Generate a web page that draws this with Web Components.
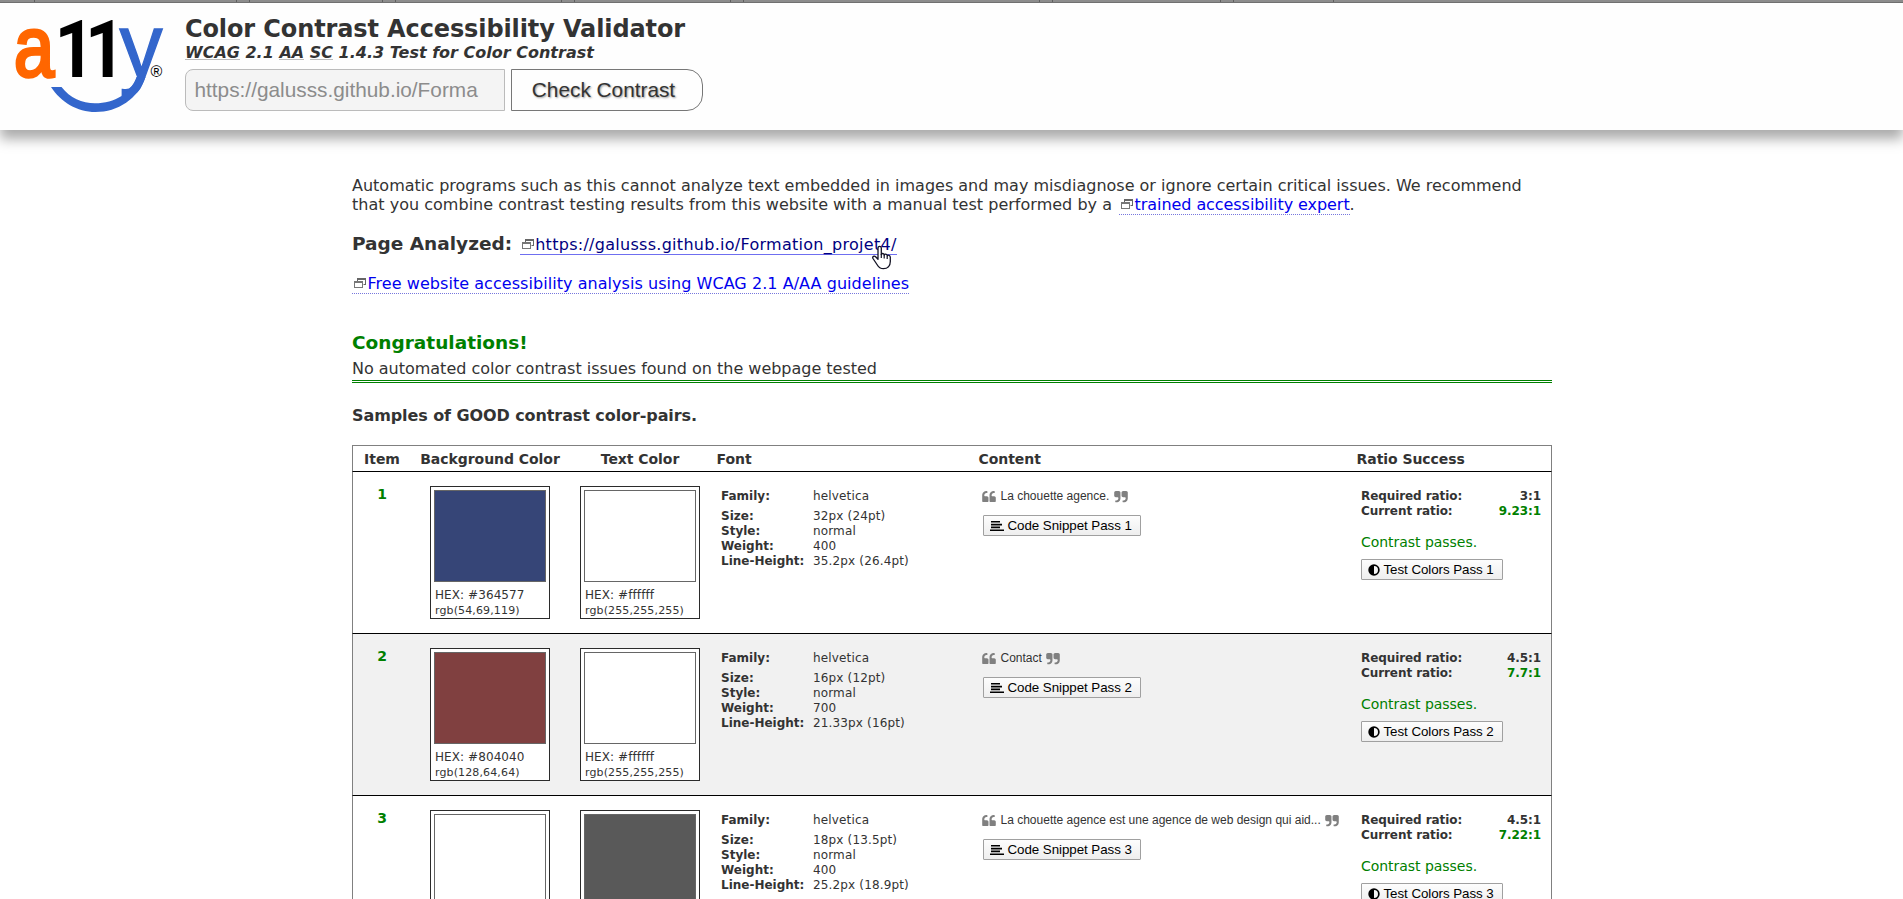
<!DOCTYPE html>
<html lang="en">
<head>
<meta charset="utf-8">
<title>Color Contrast Accessibility Validator</title>
<style>
html,body{margin:0;height:899px;overflow:hidden;background:#fff}
body{font-family:"DejaVu Sans",sans-serif;font-size:16px;color:#333}
</style>
</head>
<body>
<contrast-app></contrast-app>
<script>
const define = (name, html) => customElements.define(name, class extends HTMLElement {
  constructor() {
    super();
    const t = document.createElement('template');
    t.innerHTML = typeof html === 'function' ? '' : html;
    const root = this.attachShadow({ mode: 'open' });
    if (typeof html !== 'function') root.appendChild(t.content.cloneNode(true));
  }
  connectedCallback() {
    if (typeof html === 'function') this.shadowRoot.innerHTML = html(n => this.getAttribute(n) || '');
  }
});

/* browser tab edge above the page */
define('tab-strip', () => `
<style>
:host{display:flex;height:2px;background:#8b8b8b;border-bottom:1px solid #6c6c6c}
i{box-sizing:border-box;border-right:1px solid #5c5c5c;flex:none}
</style>` + [35,202,13,133,13,166,13,156,13,296,13,168,13,100].map(w => `<i style="width:${w}px"></i>`).join(''));

define('a11y-logo', `
<style>
:host{display:block;width:185px;flex:none}
svg{display:block}
</style>
<svg width="185" height="127" viewBox="0 3 185 127" font-family="Liberation Sans, sans-serif">
  <text transform="translate(14 75.500) scale(.84 1)" font-size="86" fill="#f60" stroke="#f60" stroke-width="3.500">a</text>
  <g font-family="Roboto, sans-serif" fill="#000" font-size="80" font-weight="bold">
    <text transform="translate(54.500 77) scale(.88 1)">1</text><text transform="translate(85 77) scale(.88 1)">1</text>
  </g>
  <text transform="translate(119.500 77)" font-size="90" fill="#36c" stroke="#36c" stroke-width="1.400" textLength="43" lengthAdjust="spacingAndGlyphs">y</text>
  <path d="M51 87H61.500C70 98 82 103.300 95 103.300C115 103.300 131 93 136.500 77L145.500 77C138 99 118 112 95.500 112C77 112 61 102 51 87Z" fill="#36c"/>
  <text x="150.500" y="76.500" font-size="16" fill="#000">®</text>
</svg>`);

define('site-header', `
<style>
:host{display:flex;height:127px;background:#fefefe;box-shadow:0 9px 12px #aaa;position:relative}
.col{padding-top:12px}
h1{margin:0;font-size:24px;line-height:28px;letter-spacing:-.114px}
p{margin:0;font-size:16px;line-height:20px;font-weight:bold;font-style:italic;white-space:nowrap}
abbr{text-decoration:none;box-shadow:0 1px #bbb;display:inline-block;height:16px;line-height:20px}
form{display:flex;gap:6px;margin:6px 0 0}
input,button{box-sizing:border-box;height:42px;font:20.8px "Liberation Sans",sans-serif;margin:0}
input{width:320px;padding:0 8.500px;border:1px solid #bbb;border-radius:8px 0 0 8px;background:#f4f4f4;color:#8c8c8c}
button{width:192px;padding:0 7px 0 0;border:1px solid #777;border-radius:0 16px 16px 0;background:#fefefe;color:#333;text-shadow:1px 1px 2px #999}
</style>
<a11y-logo></a11y-logo>
<div class="col">
  <h1>Color Contrast Accessibility Validator</h1>
  <p><abbr>WCAG</abbr> 2.1 <abbr>AA</abbr> <abbr>SC</abbr> 1.4.3 Test for Color Contrast</p>
  <form><input value="https://galusss.github.io/Forma" disabled><button type="button">Check Contrast</button></form>
</div>`);

define('ext-link', `
<style>
:host{color:#00e;border-bottom:1px dotted #77d}
:host([hovered]){color:#000080;border-bottom:1px solid #6f6ff0}
svg{width:12px;height:11px;margin:0 1.500px 0 2px;vertical-align:1px}
</style>
<svg viewBox="0 0 12 11"><path d="M3 1H12V8H9.500V7H11V3H4V4H3Z" fill="#666"/><path d="M0 4H9V11H0ZM1 6V10H8V6Z" fill="#777" fill-rule="evenodd"/></svg><slot></slot>`);

define('hand-cursor', `
<style>:host{position:absolute;left:871px;top:245px;width:22px;height:25px}svg{display:block}</style>
<svg width="22" height="25" viewBox="0 0 22 25"><path d="M7 3C7 .700 10.300 .700 10.300 3V9.500C10.600 8 13 8.200 13.200 10C13.800 8.700 16 9 16.200 10.800C17 9.700 19.300 10.200 19.300 12.200V16.500C19.300 21 16.500 23.700 12.500 23.700C9 23.700 7.600 22.300 6 19.500L2 13.500C1 11.700 3.200 10.300 4.600 11.700L7 14.200Z" fill="#fff" stroke="#112" stroke-width="1.300" stroke-linejoin="round"/><path d="M10.300 9V13M13.200 10V13.500M16.200 11V14" stroke="#112" stroke-width="1.200"/></svg>`);

define('color-swatch', a => `
<style>
:host{display:block;box-sizing:border-box;width:120px;height:133px;border:1px solid #2b2b2b;padding:3px;background:#fff;white-space:nowrap}
.c{box-sizing:border-box;height:92px;border:1px solid #666;background:${a('hex')};margin-bottom:5px}
.h{font-size:12px;line-height:16px;padding-left:1px;letter-spacing:.080px}
.r{font-size:11px;line-height:15px;padding-left:1px;letter-spacing:.13px}
</style><div class="c"></div><div class="h">HEX: ${a('hex')}</div><div class="r">rgb(${a('rgb')})</div>`);

const icons = {
  code: '<svg width="14" height="10" viewBox="0 0 14 10"><path d="M1 0H10V1.600H1ZM1 2.800H12V4.400H1ZM1 5.600H10V7.200H1ZM0 8.400H14V10H0Z"/></svg>',
  contrast: '<svg width="12" height="12" viewBox="0 0 12 12"><path fill-rule="evenodd" d="M6 .3A5.700 5.700 0 1 0 6 11.700A5.700 5.700 0 1 0 6 .3ZM6 2A4 4 0 0 1 6 10Z"/></svg>'
};
define('pass-button', a => `
<style>
:host{display:flex;box-sizing:border-box;width:${a('icon') === 'code' ? 158 : 142}px;height:21px;border:1px solid #a0a0a0;border-radius:1px;background:linear-gradient(#fdfdfd,#eee);color:#000;font:13.333px/19px "Liberation Sans",sans-serif;padding-left:6px;align-items:center;gap:3.500px;letter-spacing:-.05px;white-space:nowrap}
svg{flex:none}
</style>${icons[a('icon')]}<span><slot></slot></span>`);

const quote = '<svg class="q" width="14" height="11.500" viewBox="0 128 1664 1408"><path d="M768 960v384q0 80-56 136t-136 56H192q-80 0-136-56T0 1344V640q0-104 40.500-198.500T150 278t163.500-109.500T512 128h64q26 0 45 19t19 45v128q0 26-19 45t-45 19h-64q-106 0-181 75t-75 181v32q0 40 28 68t68 28h224q80 0 136 56t56 136z"/><path transform="translate(896)" d="M768 960v384q0 80-56 136t-136 56H192q-80 0-136-56T0 1344V640q0-104 40.500-198.500T150 278t163.500-109.500T512 128h64q26 0 45 19t19 45v128q0 26-19 45t-45 19h-64q-106 0-181 75t-75 181v32q0 40 28 68t68 28h224q80 0 136 56t56 136z"/></svg>';

define('sample-row', a => {
  const n = a('n'), font = a('font').split('|');
  return `
<style>
:host{display:grid;grid-template-columns:var(--cols);box-sizing:border-box;height:162px;border:solid #808080;border-width:0 1px 1px;border-bottom-color:#000;background:${n % 2 ? '#fff' : '#f1f1f1'}}
.n{padding-top:13px;text-align:center;font:bold 14px/18px "DejaVu Sans";color:green}
.s{padding-top:14px;display:flex;justify-content:center}
.f,.k,.r{padding-top:17px;font-size:12px;line-height:15px}
.f{padding-left:10px}
.f div,.r div{display:flex}
.f b{width:92px}
.f span{letter-spacing:.15px}
.f div:first-child{margin-bottom:5px}
.k{padding-left:10px}
.t{display:flex;align-items:center;gap:4.500px;font-family:"Liberation Sans";height:15px;margin-left:-1px;white-space:nowrap}
.q{fill:#808080;flex:none}
.q:last-child{transform:rotate(180deg)}
.k pass-button{margin-top:11px}
.r{padding-left:10px;padding-right:10px;font-weight:bold;letter-spacing:-.08px}
.r div{justify-content:space-between}
.g{color:green}
.r p{margin:14px 0 8px;font-size:14px;line-height:18px;font-weight:normal;color:green;letter-spacing:-.04px}
</style>
<div class="n">${n}</div>
<div class="s"><color-swatch hex="${a('bg')}" rgb="${a('bgrgb')}"></color-swatch></div>
<div class="s"><color-swatch hex="${a('fg')}" rgb="${a('fgrgb')}"></color-swatch></div>
<div class="f">${['Family', 'Size', 'Style', 'Weight', 'Line-Height'].map((l, i) => `<div><b>${l}:</b><span>${font[i]}</span></div>`).join('')}</div>
<div class="k"><div class="t">${quote}<span>${a('text')}</span>${quote}</div><pass-button icon="code">Code Snippet Pass ${n}</pass-button></div>
<div class="r"><div><span>Required ratio:</span><span>${a('req')}</span></div><div><span>Current ratio:</span><span class="g">${a('cur')}</span></div><p>Contrast passes.</p><pass-button icon="contrast">Test Colors Pass ${n}</pass-button></div>`;
});

define('samples-table', `
<style>
:host{display:block;--cols:58px 158px 142px 262px 378px 200px}
.h{display:grid;grid-template-columns:var(--cols);box-sizing:border-box;height:27px;border:1px solid #808080;border-bottom-color:#000;font:bold 14px/26px "DejaVu Sans";letter-spacing:-.05px}
.h span{padding-left:5.500px}
.h .m{padding:0;text-align:center}
</style>
<div class="h"><span class="m">Item</span><span class="m">Background Color</span><span class="m">Text Color</span><span>Font</span><span>Content</span><span>Ratio Success</span></div>
<slot></slot>`);

define('contrast-app', `
<style>
:host{display:block;height:899px;overflow:hidden}
main{width:1200px;padding:46px 0 0 352px}
p,h2,h3{margin:0;white-space:nowrap}
.a{line-height:19px;height:38px}
.l2{letter-spacing:.02px}
.l2 ext-link{letter-spacing:-.068px;margin-left:2px}
.pa{margin-top:18px;line-height:24px;height:24px}
.pa b{font-size:18.500px}
.pa ext-link{letter-spacing:.28px;margin-left:2.500px}
.fr{margin-top:18px;line-height:19px;height:19px;letter-spacing:.05px}
h2{margin-top:38px;font-size:18.500px;line-height:24px;color:green}
.no{margin-top:4px;line-height:20px;padding-bottom:1px;border-bottom:3px double green;letter-spacing:-.014px}
h3{margin:23px 0 19px;font-size:16px;line-height:20px;letter-spacing:-.088px}
</style>
<tab-strip></tab-strip>
<site-header></site-header>
<main>
<p class="a">Automatic programs such as this cannot analyze text embedded in images and may misdiagnose or ignore certain critical issues. We recommend<br><span class="l2">that you combine contrast testing results from this website with a manual test performed by a <ext-link>trained accessibility expert</ext-link>.</span></p>
<p class="pa"><b>Page Analyzed:</b> <ext-link hovered>https://galusss.github.io/Formation_projet4/</ext-link></p>
<p class="fr"><ext-link>Free website accessibility analysis using WCAG 2.1 A/AA guidelines</ext-link></p>
<h2>Congratulations!</h2>
<p class="no">No automated color contrast issues found on the webpage tested</p>
<h3>Samples of GOOD contrast color-pairs.</h3>
<samples-table>
<sample-row n="1" bg="#364577" bgrgb="54,69,119" fg="#ffffff" fgrgb="255,255,255" font="helvetica|32px (24pt)|normal|400|35.2px (26.4pt)" text="La chouette agence." req="3:1" cur="9.23:1"></sample-row>
<sample-row n="2" bg="#804040" bgrgb="128,64,64" fg="#ffffff" fgrgb="255,255,255" font="helvetica|16px (12pt)|normal|700|21.33px (16pt)" text="Contact" req="4.5:1" cur="7.7:1"></sample-row>
<sample-row n="3" bg="#ffffff" bgrgb="255,255,255" fg="#595959" fgrgb="89,89,89" font="helvetica|18px (13.5pt)|normal|400|25.2px (18.9pt)" text="La chouette agence est une agence de web design qui aid..." req="4.5:1" cur="7.22:1"></sample-row>
</samples-table>
</main>
<hand-cursor></hand-cursor>`);
</script>
</body>
</html>
